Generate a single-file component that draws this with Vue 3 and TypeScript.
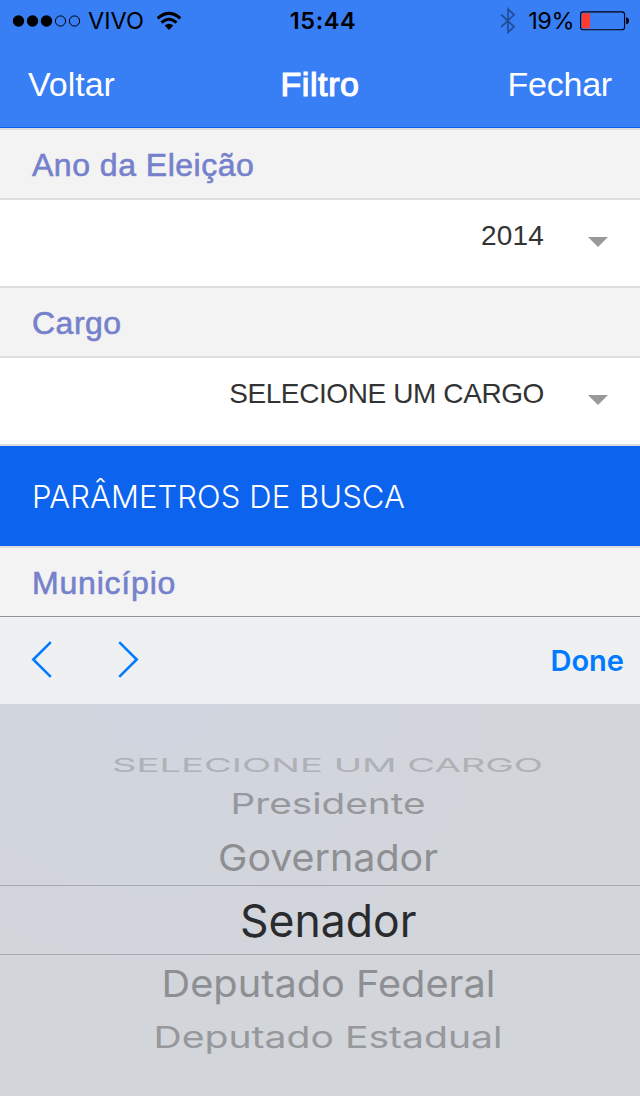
<script setup lang="ts">
interface WheelRow {
  label: string
  x: number
  width: number
  baseline: number
  squash: number
  color: string
}

const signal: boolean[] = [true, true, true, false, false]

const rows: WheelRow[] = [
  { label: 'SELECIONE UM CARGO', x: 112, width: 431, baseline: 772, squash: 0.43, color: '#aeb1b6' },
  { label: 'Presidente', x: 230.5, width: 195, baseline: 813.5, squash: 0.64, color: '#96989c' },
  { label: 'Governador', x: 218, width: 220, baseline: 871, squash: 0.83, color: '#8d8f93' },
  { label: 'Senador', x: 240, width: 176.5, baseline: 936.7, squash: 1, color: '#2a2b2e' },
  { label: 'Deputado Federal', x: 161.5, width: 334, baseline: 996.7, squash: 0.83, color: '#8d8f93' },
  { label: 'Deputado Estadual', x: 153.5, width: 349, baseline: 1048, squash: 0.66, color: '#96989c' },
]
</script>

<template>
  <main class="screen">
    <header class="header">
      <div class="status">
        <div class="carrier">
          <svg class="dots" width="68" height="14" viewBox="0 0 68 14">
            <circle
              v-for="(on, i) in signal"
              :key="i"
              :cx="6.5 + i * 14"
              cy="7"
              :r="on ? 5.7 : 5.1"
              :fill="on ? '#000' : 'none'"
              stroke="#000"
              :stroke-width="on ? 0 : 1"
            />
          </svg>
          <span class="name">VIVO</span>
          <svg class="wifi" width="26" height="20" viewBox="0 0 26 20">
            <g fill="none" stroke="#000" stroke-width="3">
              <path d="M1.7 7.4Q13 -2.6 24.3 7.4" />
              <path d="M5.5 11.6Q13 4.9 20.5 11.6" />
            </g>
            <path d="M8.7 14.5Q13 11 17.3 14.5L13 19Z" />
          </svg>
        </div>
        <span class="time">15:44</span>
        <div class="power">
          <svg class="bt" width="16" height="28" viewBox="0 0 16 28">
            <path d="M1.2 7.5L14 19.8L8 25.2V2L14 7.8L1.2 20" fill="none" stroke="#224f9c" stroke-width="1.8" />
          </svg>
          <span class="percent">19%</span>
          <svg class="battery" width="50" height="20" viewBox="0 0 50 20">
            <rect x="0.6" y="0.9" width="44" height="17.8" rx="2.8" fill="none" stroke="#000" stroke-width="1.1" />
            <path d="M3.5 2.3H10V17.3H3.5Q2 17.3 2 15.8V3.8Q2 2.3 3.5 2.3Z" fill="#ff3b30" />
            <path d="M46.2 6.3Q49 6.8 49 9.8T46.2 13.3Z" />
          </svg>
        </div>
      </div>
      <nav class="nav">
        <span class="back">Voltar</span>
        <h1>Filtro</h1>
        <span class="close">Fechar</span>
      </nav>
    </header>

    <section class="form">
      <h2 class="label">Ano da Eleição</h2>
      <div class="field">
        <span class="value number">2014</span>
        <i class="caret"></i>
      </div>
      <h2 class="label">Cargo</h2>
      <div class="field">
        <span class="value">SELECIONE UM CARGO</span>
        <i class="caret"></i>
      </div>
      <div class="banner"><span>PARÂMETROS DE BUSCA</span></div>
      <h2 class="label city">Município</h2>
    </section>

    <div class="toolbar">
      <svg width="112" height="40" viewBox="0 0 112 40">
        <g fill="none" stroke="#007aff" stroke-width="2.6">
          <path d="M22.8 1.2L5.3 18.5L22.8 35.8" />
          <path d="M91.2 1.2L108.7 18.5L91.2 35.8" />
        </g>
      </svg>
      <span class="done">Done</span>
    </div>

    <svg class="picker" width="640" height="392" viewBox="0 704 640 392">
      <path d="M0 885.5H640M0 954.5H640" stroke="#a5a8ad" stroke-width="1" />
      <text
        v-for="row in rows"
        :key="row.label"
        :transform="`translate(${row.x} ${row.baseline}) scale(1 ${row.squash})`"
        :textLength="row.width"
        lengthAdjust="spacingAndGlyphs"
        :fill="row.color"
      >{{ row.label }}</text>
    </svg>
  </main>
</template>

<style>
body {
  margin: 0;
}
</style>

<style scoped>
.screen {
  width: 640px;
  height: 1096px;
  overflow: hidden;
  background: #fff;
  font-family: "Liberation Sans", Arial, sans-serif;
}
.header {
  box-sizing: border-box;
  height: 128px;
  background: #387ef5;
  border-bottom: 1px solid #0c60ee;
}
.status {
  box-sizing: border-box;
  display: grid;
  grid-template-columns: 1fr auto 1fr;
  align-items: center;
  height: 40px;
  padding: 1px 10px 0 12px;
  font-family: Inter, sans-serif;
  font-size: 23.5px;
  line-height: 39px;
}
.carrier,
.power {
  display: flex;
  align-items: center;
}
.power {
  justify-content: flex-end;
}
.name {
  margin-left: 8px;
}
.wifi {
  margin-left: 12px;
}
.time {
  margin-left: 4px;
  font-weight: 600;
  letter-spacing: 0.6px;
}
.percent {
  margin: 0 6px 0 12px;
  letter-spacing: -0.5px;
}
.nav {
  display: grid;
  grid-template-columns: 1fr auto 1fr;
  padding: 0 28px;
  color: #fff;
  font-size: 34px;
  line-height: 88px;
}
.nav h1 {
  margin: 0;
  font-size: 34px;
  font-weight: 400;
  letter-spacing: 0.6px;
  -webkit-text-stroke: 1.2px #fff;
}
.close {
  text-align: right;
  letter-spacing: -0.2px;
}
.form {
  border-top: 2px solid #ddd;
}
.label {
  box-sizing: border-box;
  height: 70px;
  margin: 0;
  padding-left: 32px;
  border-bottom: 2px solid #ddd;
  background: #f3f3f3;
  color: #7681cc;
  font-size: 32px;
  font-weight: 400;
  line-height: 70px;
  letter-spacing: 0.5px;
  -webkit-text-stroke: 0.6px #7681cc;
}
.city {
  height: 69px;
  border-bottom: 1px solid #909298;
  letter-spacing: 0.8px;
}
.field {
  box-sizing: border-box;
  display: flex;
  justify-content: flex-end;
  align-items: flex-start;
  height: 88px;
  padding-right: 32px;
  border-bottom: 2px solid #ddd;
  color: #333;
  font-size: 28px;
  line-height: 72px;
}
.value {
  letter-spacing: -0.4px;
}
.number {
  letter-spacing: 0.2px;
}
.caret {
  margin: 37px 0 0 44px;
  border-top: 10px solid #999;
  border-left: 10px solid transparent;
  border-right: 10px solid transparent;
}
.banner {
  box-sizing: border-box;
  height: 102px;
  padding-left: 32px;
  border-bottom: 2px solid #ddd;
  background: #0c63ee;
  color: #fff;
  font-family: Inter, sans-serif;
  font-size: 31px;
  font-weight: 300;
  line-height: 102px;
  letter-spacing: 0.1px;
}
.toolbar {
  display: flex;
  justify-content: space-between;
  align-items: center;
  box-sizing: border-box;
  height: 87px;
  padding: 0 16px 0 28px;
  background: #eff0f2;
  color: #007aff;
}
.done {
  padding-top: 1px;
  font-family: Inter, sans-serif;
  font-size: 29px;
  font-weight: 600;
  line-height: 86px;
}
.picker {
  display: block;
  background: radial-gradient(ellipse at 25% 0, #d1d5df 0, #d2d5da 55%);
}
.picker text {
  font-family: Inter, sans-serif;
  font-size: 45px;
}
</style>
